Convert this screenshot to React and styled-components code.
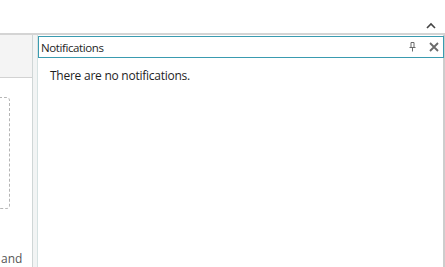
import React from 'react';
import styled, { createGlobalStyle } from 'styled-components';

const Global = createGlobalStyle`
  html, body { margin: 0; padding: 0; background: #fff; overflow: hidden; }
  body { font-family: "Open Sans", "Liberation Sans", Arial, sans-serif; }
`;

const Page = styled.div`
  width: 445px;
  height: 267px;
  display: flex;
  flex-direction: column;
  background: #fff;
`;

const TopBar = styled.div`
  height: 33px;
  display: flex;
  justify-content: flex-end;
  align-items: flex-end;
  padding-right: 9px;
  box-sizing: border-box;
`;

const Collapse = styled.svg`
  margin-bottom: 4px;
`;

const Rule = styled.div`
  height: 2px;
  background: #d4d4d4;
`;

const Body = styled.div`
  flex: 1;
  display: flex;
  min-height: 0;
`;

const LeftPane = styled.div`
  width: 32px;
  display: flex;
  flex-direction: column;
  border-right: 1px solid #cfd6d6;
`;

const LeftHeader = styled.div`
  height: 42px;
  background: #f4f4f4;
  border-bottom: 1px solid #d2d2d2;
`;

const LeftContent = styled.div`
  flex: 1;
  display: flex;
  flex-direction: column;
  padding-top: 19px;
  background: #fff;
`;

const DropZone = styled.div`
  width: 10px;
  height: 110px;
  margin-left: -1px;
  border: 1px dashed #b5b5b5;
  border-left: none;
  border-radius: 0 4px 4px 0;
`;

const CutText = styled.div`
  margin-top: auto;
  margin-bottom: 1px;
  padding-left: 1px;
  font-size: 12px;
  color: #555;
  line-height: 14px;
  white-space: nowrap;
`;

const Splitter = styled.div`
  width: 4px;
  background: #f2f4f4;
  border-right: 1px solid #d6e2e2;
`;

const Panel = styled.div`
  flex: 1;
  display: flex;
  flex-direction: column;
  padding-top: 1px;
  border-right: 2px solid #cdcdcd;
`;

const TitleBar = styled.div`
  height: 20px;
  display: flex;
  align-items: center;
  border: 1px solid #3a9bb0;
  margin-right: -1px;
  padding: 0 4px 0 2px;
  font-size: 11.5px;
  color: #1e1e1e;
  letter-spacing: -0.4px;
`;

const Title = styled.span`
  flex: 1;
`;

const Tool = styled.svg`
  margin-left: ${p => p.$gap || 0}px;
`;

const Content = styled.div`
  flex: 1;
  padding: 9px 12px;
  font-size: 12px;
  color: #1e1e1e;
  letter-spacing: -0.25px;
`;

export default function App() {
  return (
    <Page>
      <Global />
      <TopBar>
        <Collapse width="10" height="7" viewBox="0 0 10 7">
          <path d="M1 6 L5 2 L9 6" fill="none" stroke="#444" strokeWidth="1.6" />
        </Collapse>
      </TopBar>
      <Rule />
      <Body>
        <LeftPane>
          <LeftHeader />
          <LeftContent>
            <DropZone />
            <CutText>and</CutText>
          </LeftContent>
        </LeftPane>
        <Splitter />
        <Panel>
          <TitleBar>
            <Title>Notifications</Title>
            <Tool width="7" height="10" viewBox="0 0 7 10">
              <path d="M2 0.5 V5.5 M5 0.5 V5.5 M0.5 5.5 H6.5 M3.5 5.5 V9.5 M2 0.5 H5" fill="none" stroke="#6a6a6a" strokeWidth="1" />
            </Tool>
            <Tool $gap={13} width="10" height="10" viewBox="0 0 10 10">
              <path d="M1 1 L9 9 M9 1 L1 9" fill="none" stroke="#6a6a6a" strokeWidth="1.8" />
            </Tool>
          </TitleBar>
          <Content>There are no notifications.</Content>
        </Panel>
      </Body>
    </Page>
  );
}
